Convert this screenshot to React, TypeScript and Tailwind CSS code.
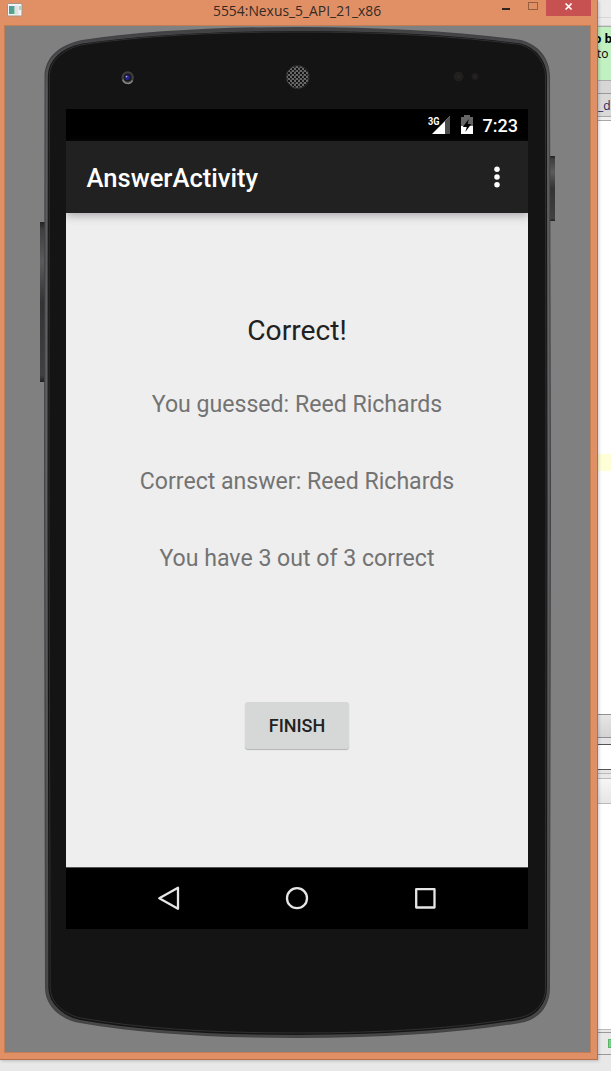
import React from "react";

function TitleBar() {
  return (
    <header className="relative flex h-[25px] shrink-0 items-start justify-between">
      <svg className="ml-[7px] mt-[3px] h-[14px] w-[16px]" viewBox="0 0 16 14">
        <defs>
          <linearGradient id="app" x1="0" y1="0" x2="1" y2="1">
            <stop offset="0" stopColor="#5a8fb0" />
            <stop offset="1" stopColor="#4fb07a" />
          </linearGradient>
        </defs>
        <rect x="0.5" y="0.5" width="14.5" height="12.5" rx="1" fill="#f4f4f4" stroke="#a5928a" />
        <rect x="2" y="3" width="5.5" height="8" fill="url(#app)" />
        <rect x="8" y="2.5" width="3.5" height="9" fill="#dfe1e3" />
        <rect x="12" y="3" width="2" height="4" fill="#a9d5c0" />
      </svg>
      <h1 className="absolute left-[213px] top-0 origin-left scale-x-[0.925] whitespace-nowrap font-['Open_Sans',sans-serif] text-[15px] leading-[21px] text-[#342a25]">
        5554:Nexus_5_API_21_x86
      </h1>
      <div className="mr-[6px] flex items-start">
        <svg className="h-[16px] w-[89px]" viewBox="0 0 89 16">
          <path d="M0 8h8v2H0z" fill="#2f2622" />
          <rect x="26.5" y="2.5" width="9" height="7" fill="none" stroke="#94603f" />
          <rect x="44" y="0" width="45" height="16" fill="#c75050" />
          <path d="M63.6 3.5l6 6m0-6l-6 6" stroke="#fff" strokeWidth="1.7" />
        </svg>
      </div>
    </header>
  );
}

function PhoneBody() {
  return (
    <svg className="absolute left-0 top-0 h-[1026px] w-[585px]" viewBox="5 26 585 1026">
      <defs>
        <linearGradient id="rim" x1="0" y1="0" x2="0" y2="1">
          <stop offset="0" stopColor="#424244" />
          <stop offset="0.06" stopColor="#5a5a5e" />
          <stop offset="0.45" stopColor="#626267" />
          <stop offset="1" stopColor="#464646" />
        </linearGradient>
        <linearGradient id="key" x1="0" y1="0" x2="0" y2="1">
          <stop offset="0" stopColor="#222" />
          <stop offset="0.05" stopColor="#404040" />
          <stop offset="0.25" stopColor="#5b5b5b" />
          <stop offset="0.5" stopColor="#333" />
          <stop offset="0.96" stopColor="#404040" />
          <stop offset="1" stopColor="#202020" />
        </linearGradient>
        <pattern id="mesh" width="4" height="4" patternUnits="userSpaceOnUse">
          <rect width="4" height="4" fill="#686868" />
          <rect x="0" y="0" width="2" height="2" fill="#121212" />
          <rect x="2" y="2" width="1.7" height="1.7" fill="#121212" />
        </pattern>
      </defs>
      <rect x="40" y="222" width="5" height="160" fill="url(#key)" />
      <rect x="550" y="156" width="5" height="65" fill="url(#key)" />
      <path d="M44.5 76C45 58 58 45 82 40Q170 27 297.5 27T521 40C539 45 549.5 58 550 76L551 500L550 988C550 1007 538 1020 520 1023Q430 1038 297.5 1038T80 1023C62 1020 45 1007 45 988L44 500Z" fill="#424244" />
      <path d="M46.7 76C47 60 60 47 82 42.5Q170 30 297.5 30T521 42.5C537 47 547.5 60 548 76L548.6 500L548 988C548 1004 537 1018 519 1021Q430 1036 297.5 1036T80 1021C63 1018 47.3 1004 47.3 988L46.4 500Z" fill="#141414" stroke="url(#rim)" strokeWidth="2.2" />
      <path d="M49.3 76C49.5 62 62 49 83 44.5Q170 32 297.5 32T520 44.5C535 49 545 62 545.5 76L546 500L545.5 988C545.5 1003 535 1015 518 1018Q430 1033 297.5 1033T81 1018C65 1015 50.2 1003 50.2 988L49 500Z" fill="#141414" stroke="#303032" strokeWidth="1" />
      <circle cx="127.7" cy="77.5" r="6.2" fill="#3f3f3f" />
      <path d="M122.8 79.5a5.2 5.2 0 0 0 9.7 1" fill="none" stroke="#888" strokeWidth="1.5" />
      <circle cx="127.7" cy="77.5" r="3.9" fill="#18181e" />
      <circle cx="127.3" cy="77.5" r="2.4" fill="#25259b" />
      <circle cx="126.5" cy="76.6" r="0.8" fill="#b8b8f0" />
      <circle cx="297.7" cy="77" r="11.5" fill="url(#mesh)" stroke="#292929" />
      <circle cx="458.5" cy="76.5" r="5" fill="#211e1e" />
      <circle cx="458.8" cy="76.5" r="1.4" fill="#302425" />
      <circle cx="475" cy="76.5" r="3.5" fill="#211e1e" />
      <circle cx="475" cy="76.5" r="1.2" fill="#302425" />
    </svg>
  );
}

function StatusBar() {
  return (
    <div className="flex h-[32px] shrink-0 items-center justify-end bg-black pr-[10px] text-white">
      <svg className="h-[32px] w-[50px]" viewBox="427 109 50 32">
        <text x="426.9" y="124.5" fill="#fff" fontFamily="Roboto, sans-serif" fontWeight="700" fontSize="10.5" textLength="11.5" lengthAdjust="spacingAndGlyphs">3G</text>
        <path d="M449 116v18h-18l13-13z" fill="#fff" />
        <path d="M444 121l5-5v18h-5z" fill="#4d4d4d" />
        <path d="M460 117h3v-2h6v2h3v9h-12z" fill="#666" />
        <path d="M460 126h12v8h-12z" fill="#fff" />
        <path d="M467.8 119l-6 8h4l-1.5 5 6-8h-3.6z" fill="#000" />
      </svg>
      <span className="ml-[5px] pt-px text-[18px] font-medium leading-[31px]">7:23</span>
    </div>
  );
}

function AppBar() {
  return (
    <div className="relative z-10 flex h-[72px] shrink-0 items-center justify-between bg-[#212121] pl-[20.5px] pr-[27px] shadow-[0_2px_9px_rgba(60,50,60,0.42)]">
      <h2 className="pt-[4px] text-[25.6px] font-medium leading-none text-white">AnswerActivity</h2>
      <svg className="h-[24px] w-[8px]" viewBox="0 0 8 24">
        <circle cx="4" cy="4.3" r="2.75" fill="#fff" />
        <circle cx="4" cy="12" r="2.75" fill="#fff" />
        <circle cx="4" cy="19.7" r="2.75" fill="#fff" />
      </svg>
    </div>
  );
}

function NavBar() {
  return (
    <nav className="flex h-[62px] shrink-0 bg-black">
      <svg className="h-[62px] w-[462px]" viewBox="66 867 462 62" fill="none" stroke="#e6e6e6" strokeWidth="2.3" strokeLinejoin="round">
        <path d="M66 867.5h462" stroke="#555" strokeWidth="1" />
        <path d="M159.3 898.3L178 887.8v21z" />
        <circle cx="297" cy="898.2" r="10" />
        <rect x="416.2" y="889.2" width="18.3" height="18.3" />
      </svg>
    </nav>
  );
}

function Screen() {
  return (
    <main className="relative ml-[61px] mt-[83px] flex h-[820px] w-[462px] flex-col overflow-hidden bg-[#eeeeee] font-['Roboto',sans-serif]">
      <StatusBar />
      <AppBar />
      <section className="flex min-h-0 flex-1 flex-col items-center pt-[101px] text-[23.1px] leading-[34px] text-[#737373]">
        <p className="text-[28.2px] leading-[34px] text-[#212121]">Correct!</p>
        <p className="mt-[40px]">You guessed: Reed Richards</p>
        <p className="mt-[43px]">Correct answer: Reed Richards</p>
        <p className="mt-[43px]">You have 3 out of 3 correct</p>
        <button className="mt-[126px] h-[47px] w-[104px] rounded-[3px] bg-[#d6d8d7] text-[18px] font-medium leading-[47px] text-[#212121] shadow-[0_1px_1px_rgba(0,0,0,0.25)]">
          FINISH
        </button>
      </section>
      <NavBar />
    </main>
  );
}

function EditorEdge() {
  return (
    <aside className="flex h-[1060px] w-[13px] flex-col overflow-hidden bg-white font-['Open_Sans',sans-serif] text-[12px] text-black">
      <div className="h-[26px] shrink-0 border-b border-[#d5d5d5] bg-[#ebebeb] pt-[17px]">
        <div className="h-px bg-[#d7d7d7]" />
      </div>
      <div className="h-[55px] shrink-0 whitespace-nowrap border-b border-t border-[#aaa] bg-[#c1f0c1] pt-[4px] leading-[15px]">
        <div className="-ml-[4px] font-bold">o b</div>
        <div className="-ml-px">to</div>
      </div>
      <div className="h-[13px] shrink-0 border-b border-[#999] bg-[#d6d6d6]" />
      <div className="h-[22px] shrink-0 whitespace-nowrap bg-[#d9d9d9] leading-[23px] text-[#1c285c]">_d</div>
      <div className="h-[5px] shrink-0 border-b border-t border-[#a8a8a8] bg-[#eeeeee]" />
      <div className="h-[333px] shrink-0" />
      <div className="h-[17px] shrink-0 bg-[#ffffd7]" />
      <div className="h-[243px] shrink-0" />
      <div className="h-[24px] shrink-0 border-b border-t border-[#909090] bg-gradient-to-b from-[#e6e6e6] to-[#d3d3d3]" />
      <div className="h-[7px] shrink-0 border-b border-[#555] bg-[#e4e4e6]" />
      <div className="h-[24px] shrink-0" />
      <div className="h-[5px] shrink-0 border-b border-t border-b-[#bbb] border-t-[#555] bg-[#e5e5e5]" />
      <div className="h-[5px] shrink-0 border-b border-[#bbb] bg-[#e8e8e8]" />
      <div className="h-[25px] shrink-0 border-b border-[#bbb] bg-gradient-to-b from-[#f6f6f6] to-[#e6e6e6]" />
      <div className="h-[225px] shrink-0" />
      <div className="h-[4px] shrink-0 border-b border-t border-b-[#999] border-t-[#bbb] bg-[#e8e8e8]" />
      <div className="flex h-[22px] shrink-0 items-center justify-end border-b border-[#999] bg-[#e8e8e8]">
        <div className="h-[9px] w-[3px] rounded-l-[1px] border-y border-l border-[#57b366] bg-[#81ce8b]" />
      </div>
      <div className="flex-1 bg-[#e8e8e8]" />
    </aside>
  );
}

export default function App() {
  return (
    <div className="h-[1071px] w-[611px] overflow-hidden bg-[#e8e8e8]">
      <div className="flex">
        <div className="relative z-10 flex h-[1060px] w-[598px] shrink-0 flex-col border-b border-r border-[#b4714a] bg-[#e19065] shadow-[1px_1px_3px_rgba(0,0,0,0.2)]">
          <TitleBar />
          <div className="ml-[4px] h-[1028px] w-[587px] border border-[#c17d56] bg-[#808080]">
            <div className="relative flex h-[1026px] w-[585px] items-start">
              <PhoneBody />
              <Screen />
            </div>
          </div>
        </div>
        <EditorEdge />
      </div>
    </div>
  );
}
